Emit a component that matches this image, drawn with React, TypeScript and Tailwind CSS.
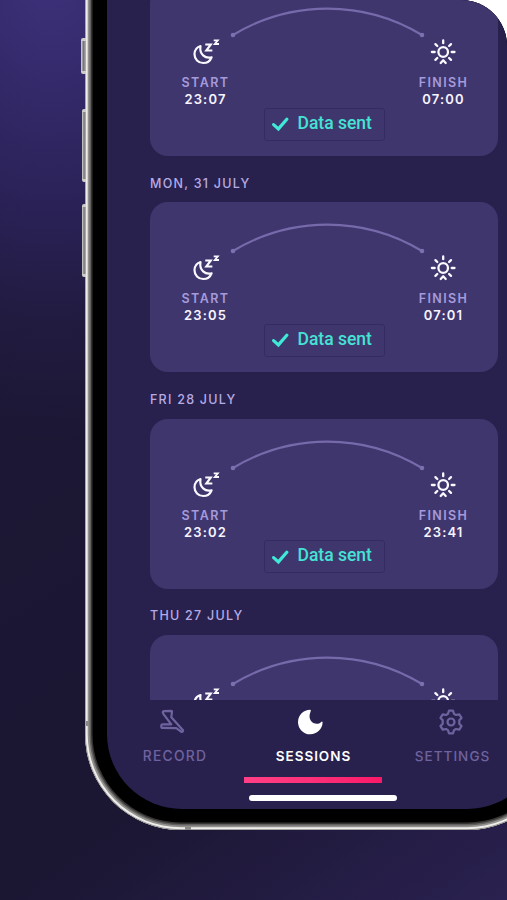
import type { ReactNode } from "react";

type Night = { id: number; start?: string; finish?: string; nextDate?: string };

const NIGHTS: Night[] = [
  { id: 1, start: "23:07", finish: "07:00", nextDate: "MON, 31 JULY" },
  { id: 2, start: "23:05", finish: "07:01", nextDate: "FRI 28 JULY" },
  { id: 3, start: "23:02", finish: "23:41", nextDate: "THU 27 JULY" },
  { id: 4 },
];

function SleepIcon() {
  return (
    <svg className="block shrink-0 overflow-visible" width="28" height="28" viewBox="0 0 28 28" fill="none" stroke="#fbf9ff" strokeWidth="2.2" strokeLinejoin="round" strokeLinecap="round">
      <path d="M9.500 8C5.800 9.200 3.500 12.500 3.500 16.300c0 4.900 3.800 8.700 8.700 8.700 3.800 0 7.100-2.300 8.400-5.700-6.400 1.600-12.500-3-11.100-11.300Z" />
      <path d="M15.300 6.500h4.500l-4.500 6h5" strokeWidth="2.1" strokeLinecap="square" strokeLinejoin="miter" />
      <path d="M23.600 2.300h3.200l-3 3.700h3.300" strokeWidth="1.8" strokeLinecap="square" strokeLinejoin="miter" />
    </svg>
  );
}

function SunIcon() {
  return (
    <svg className="block shrink-0" width="28" height="28" viewBox="0 0 28 28" fill="none" stroke="#fbf9ff" strokeWidth="2.3" strokeLinecap="round" strokeLinejoin="round">
      <circle cx="14.200" cy="14" r="4.800" />
      <path d="M14.200 2.400v2.800M2.900 14h2.800M22.700 14h2.800M6.400 6.100l1.900 1.900M22 6.100l-1.900 1.900M6.400 21.900l1.900-1.900M22 21.900l-1.900-1.900M11.700 25l2.500-2.700 2.500 2.700" />
    </svg>
  );
}

function TimeColumn({ label, time, children }: { label: string; time?: string; children: ReactNode }) {
  return (
    <div className="flex w-14 shrink-0 flex-col items-center pt-[52px]">
      {children}
      {time && (
        <>
          <span className="mt-[8px] pl-px text-[12.5px] leading-[17px] font-semibold tracking-[1.4px] text-[#a59adb]">{label}</span>
          <span className="pl-px text-[13px] leading-[17px] font-semibold tracking-[1.15px] text-[#f7f4ff]">{time}</span>
        </>
      )}
    </div>
  );
}

function SentBadge() {
  return (
    <div className="flex h-[33px] w-[121px] shrink-0 items-center rounded-[3px] border-[1.5px] border-[#342b62] pl-[7px]">
      <svg className="mr-[8px] shrink-0" width="18" height="16" viewBox="0 0 18 16" fill="none" stroke="#3fe9d6" strokeWidth="3.2">
        <path d="M1.600 8.600l4.800 4.300L14.800 3.200" strokeLinecap="round" />
      </svg>
      <span className="-mt-px font-[Roboto,sans-serif] text-[17.5px] leading-none font-medium whitespace-nowrap text-[#46e2d4]">Data sent</span>
    </div>
  );
}

function NightCard({ start, finish }: Night) {
  return (
    <div className="flex h-[170px] shrink-0 flex-col items-center rounded-[18px] bg-[#3f366d]">
      <div className="flex h-[121.5px] w-full px-[27px]">
        <TimeColumn label="START" time={start}><SleepIcon /></TimeColumn>
        <svg className="block w-0 min-w-0 flex-1 overflow-visible" height="60" fill="none">
          <path d="M0 49A182 182 0 0 1 189 49" stroke="#776aab" strokeWidth="2.2" />
          <circle cx="0" cy="49" r="2.300" fill="#7d70b1" />
          <circle cx="189" cy="49" r="2.300" fill="#7d70b1" />
        </svg>
        <TimeColumn label="FINISH" time={finish}><SunIcon /></TimeColumn>
      </div>
      {start && <SentBadge />}
    </div>
  );
}

function NavBar() {
  return (
    <div className="flex h-[108px] w-full flex-col">
      <div className="flex h-[77px] text-[13.5px] tracking-[1.05px] text-[#6f639f]">
        <div className="flex w-[137px] flex-col items-center">
          <svg className="mt-[8px] mr-1 block overflow-visible" width="28" height="28" viewBox="0 0 28 28" fill="none" stroke="currentColor" strokeWidth="2.2" strokeLinejoin="round">
            <path d="M3.800 4.100Q4 3.300 5 3.200L12 2.900q1.200 0 1 1l-.7 5.300L24 22.300q.4 1.700-1.600 1.600L17.300 20.200 3.600 19.900q-1.300 0-1.300-1.200v-1.200q0-1.200 1.300-1.200H12.300L4.300 5.800Z" />
          </svg>
          <span className="mt-[10px] text-[13.8px] leading-5 font-medium tracking-[1.3px]">RECORD</span>
        </div>
        <div className="flex w-[139px] flex-col items-center text-white">
          <svg className="mt-[8px] mr-1.5 block" width="28" height="28" viewBox="0 0 28 28" fill="#fff">
            <path d="M14.200 1.700A12.300 12.300 0 1 0 26.600 14.300Q26.300 12.800 24.900 14.200C20.500 18.600 10.200 13.700 14.600 3.500Q15.300 1.900 14.200 1.700Z" />
          </svg>
          <span className="mt-[10px] pl-px leading-5 font-semibold tracking-[0.95px]">SESSIONS</span>
        </div>
        <div className="flex w-[140px] flex-col items-center">
          <svg className="mt-[8px] mr-1 block" width="28" height="28" viewBox="0 0 24 24" fill="none" stroke="currentColor" strokeWidth="1.9" strokeLinejoin="round">
            <circle cx="12" cy="12" r="3" />
            <path d="M10.300 2.300h3.400l.9 2.700 1.700 1 2.800-.6 1.900 3.100-1.900 2.100v2.800l1.900 2.100-1.900 3.100-2.800-.6-1.700 1-.9 2.700h-3.400l-.9-2.700-1.700-1-2.800.6L3 15.500l1.900-2.100v-2.800L3 8.500l1.900-3.100 2.800.6 1.700-1Z" />
          </svg>
          <span className="mt-[10px] leading-5 font-medium">SETTINGS</span>
        </div>
      </div>
      <div className="ml-[137.5px] h-[5.5px] w-[138px] bg-linear-to-r from-[#ff3f86] to-[#fa1769]" />
      <div className="mt-[12px] ml-[142.5px] h-[6px] w-[148px] rounded-full bg-white" />
    </div>
  );
}

function SideButton({ className }: { className: string }) {
  return <div className={"absolute rounded-l-[2px] border-y-3 border-y-[#cfcdc9] bg-linear-to-r from-[#dad8d4] via-[#77757a] to-[#b9b7b5] " + className} />;
}

export default function App() {
  return (
    <div className="h-[900px] w-[507px] overflow-hidden bg-white font-[Inter,'Liberation_Sans',sans-serif]">
      <div className="relative h-full w-full overflow-hidden rounded-tr-[46px] bg-[radial-gradient(ellipse_330px_470px_at_50px_-30px,#3e327c_0%,#332969_27%,#2a2257_50%,#211b40_75%,transparent_100%),linear-gradient(145deg,#1c1734_0%,#1b1632_72%,#2a2150_100%)]">
        <SideButton className="top-[38px] left-[81px] h-9 w-[5px]" />
        <SideButton className="top-[109px] left-[82px] h-[73px] w-1" />
        <SideButton className="top-[204px] left-[82px] h-[73px] w-1" />
        <div className="-mt-5 ml-[85px] h-[850px] w-[478px] rounded-b-[96px] bg-black p-[21.5px] pt-0 shadow-[inset_0_0_0_0.7px_#8b898b,inset_0_0_0_2.7px_#eeede9,inset_0_0_0_4.5px_#92918f,inset_0_0_0_6px_#63615f,inset_0_0_0_7.5px_#353433]">
          <div className="flex h-full w-full flex-col overflow-hidden rounded-b-[75px] bg-[#29214d]">
            <div className="flex h-[720px] shrink-0 flex-col overflow-hidden px-[43.5px] pt-[6px]">
              {NIGHTS.map((night) => (
                <div key={night.id} className="shrink-0">
                  <NightCard {...night} />
                  {night.nextDate && (
                    <div className="flex h-[46.25px] items-center pt-[10px] text-[12.5px] font-medium tracking-[1.25px] text-[#b5abe4]">{night.nextDate}</div>
                  )}
                </div>
              ))}
            </div>
            <NavBar />
          </div>
        </div>
        <div className="absolute top-[721px] left-[86px] h-[5px] w-[3px] bg-[#8a8888]" />
        <div className="absolute top-[827px] left-[185px] h-[3px] w-[6px] bg-[#8a8888]" />
      </div>
    </div>
  );
}
